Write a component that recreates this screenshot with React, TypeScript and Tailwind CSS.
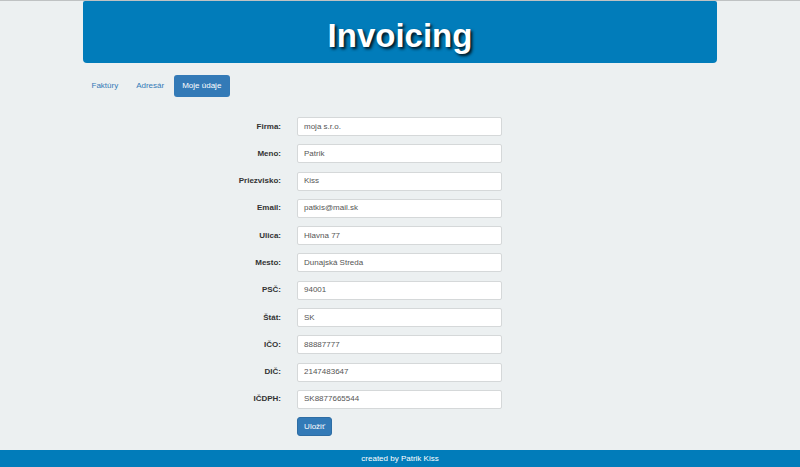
const fields: [string, string][] = [
  ["Firma:", "moja s.r.o."],
  ["Meno:", "Patrik"],
  ["Priezvisko:", "Kiss"],
  ["Email:", "patkis@mail.sk"],
  ["Ulica:", "Hlavna 77"],
  ["Mesto:", "Dunajská Streda"],
  ["PSČ:", "94001"],
  ["Štát:", "SK"],
  ["IČO:", "88887777"],
  ["DIČ:", "2147483647"],
  ["IČDPH:", "SK8877665544"],
];

export default function App() {
  return (
    <div
      className="min-h-[467px] bg-[#ecf0f1] border-t border-[#bfc2c3] flex flex-col"
      style={{ fontFamily: '"Liberation Sans", Arial, sans-serif' }}
    >
      <div className="w-[634px] mx-auto flex-1">
        {/* Header */}
        <div className="h-[62px] bg-[#017cba] rounded-b-[4px] rounded-t-[2px] pt-[18px] text-center">
          <h1 className="text-[33px] leading-[33px] font-bold text-white [text-shadow:2px_2px_3px_rgba(0,0,0,0.85)]">
            Invoicing
          </h1>
        </div>

        {/* Nav */}
        <div className="flex gap-[1px] mt-[12px] text-[8px]">
          <a className="h-[22px] px-[8.5px] flex items-center text-[#337ab7] rounded-[3px]">Faktúry</a>
          <a className="h-[22px] px-[8.5px] flex items-center text-[#337ab7] rounded-[3px]">Adresár</a>
          <a className="h-[22px] px-[8.5px] flex items-center text-white bg-[#337ab7] rounded-[3px]">Moje údaje</a>
        </div>

        {/* Form */}
        <div className="mt-[20px] flex flex-col gap-[8.3px]">
          {fields.map(([label, value]) => (
            <div key={label} className="flex items-center h-[19px]">
              <label className="w-[198px] text-right text-[8px] font-bold text-[#333]">{label}</label>
              <div className="ml-[16px] w-[205px] h-[19px] bg-white border border-[#d5d8d9] rounded-[2px] px-[6px] flex items-center text-[8px] text-[#555]">
                {value}
              </div>
            </div>
          ))}
          <div className="flex">
            <div className="ml-[214px] w-[35px] h-[19px] bg-[#337ab7] border border-[#2e6da4] rounded-[3px] flex items-center justify-center text-[8px] text-white">
              Uložiť
            </div>
          </div>
        </div>
      </div>

      {/* Footer */}
      <div className="h-[17px] bg-[#017cba] flex items-center justify-center text-[8px] text-white">
        created by Patrik Kiss
      </div>
    </div>
  );
}
